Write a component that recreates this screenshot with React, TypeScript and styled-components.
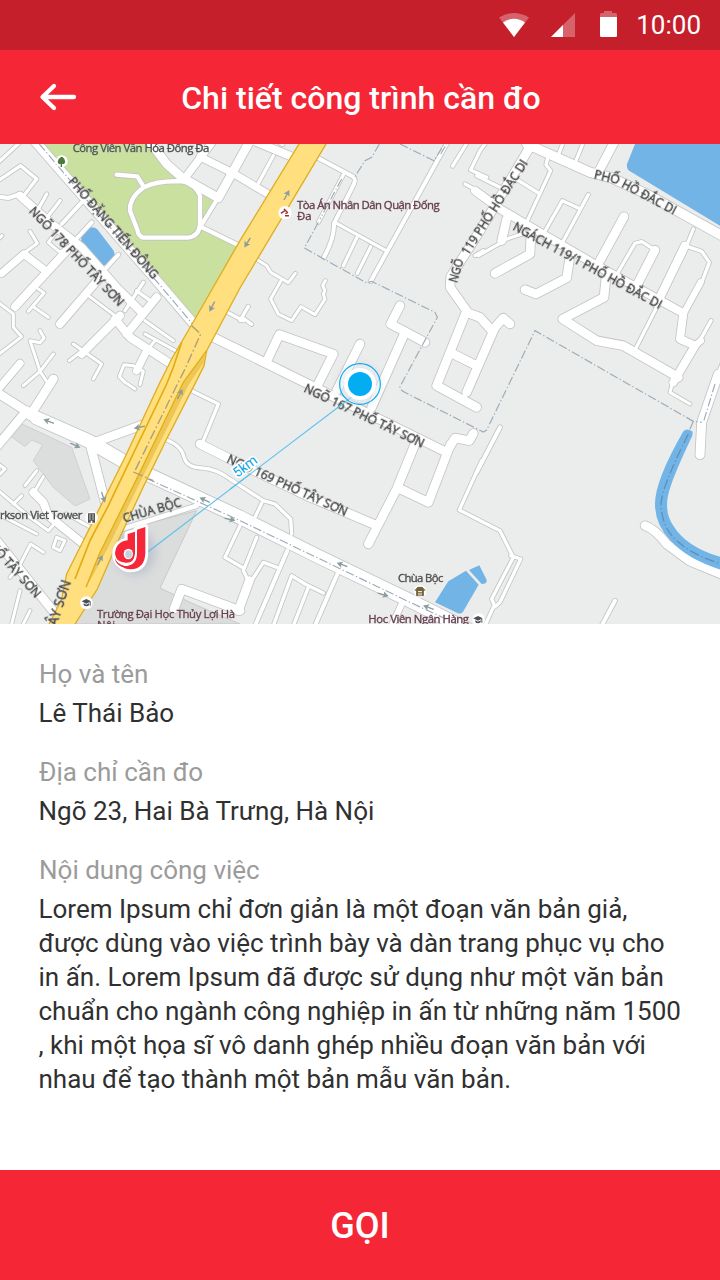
import React from "react";
import styled, { createGlobalStyle } from "styled-components";

const GlobalStyle = createGlobalStyle`
  * { box-sizing: border-box; }
  body { margin: 0; background: #fff; font-family: Roboto, "Noto Sans", sans-serif; }
`;

const Screen = styled.div`
  width: 720px;
  height: 1280px;
  display: flex;
  flex-direction: column;
  background: #fff;
  overflow: hidden;
`;

const StatusBar = styled.div`
  height: 50px;
  flex: none;
  display: flex;
  align-items: center;
  justify-content: flex-end;
  padding-right: 19px;
  background: #c41f2b;
  color: #fff;
`;

const StatusIcons = styled.svg`
  display: block;
  width: 120px;
  height: 50px;
  margin-right: 17px;
`;

const Clock = styled.span`
  font-size: 26px;
  line-height: 50px;
`;

const AppBar = styled.header`
  height: 94px;
  flex: none;
  display: grid;
  grid-template-columns: 120px 1fr 120px;
  align-items: center;
  background: #f52636;
`;

const BackButton = styled.button`
  display: block;
  border: 0;
  padding: 0 0 0 38px;
  background: none;
  svg { display: block; }
`;

const Title = styled.h1`
  margin: 0;
  padding: 2px 0 0 2px;
  text-align: center;
  font-size: 32px;
  line-height: 40px;
  font-weight: 500;
  color: #fff;
  white-space: nowrap;
`;

const MapView = styled.svg`
  display: block;
  flex: none;
  width: 720px;
  height: 480px;
  background: #ebecec;
`;

const Details = styled.main`
  flex: 1;
  padding: 33px 0 0 38.5px;
`;

const Field = styled.section`
  margin-bottom: 25px;
`;

const Label = styled.div`
  padding-left: 0.5px;
  font-size: 26px;
  line-height: 34px;
  color: #9b9b9b;
`;

const Value = styled.div`
  margin-top: 5px;
  font-size: 26px;
  line-height: 34px;
  color: #303030;
  white-space: nowrap;
`;

const CallButton = styled.button`
  height: 110px;
  flex: none;
  border: 0;
  padding: 2px 0 0;
  background: #f52636;
  color: #fff;
  font-family: inherit;
  font-size: 36px;
  font-weight: 500;
`;

type Road = [number, string];

const roads: Road[] = [
  [10, "M60 -5L-5 55M-5 110L62 65L110 105L75 150M140 150L115 195M180 170L145 215M430 415L375 500M410 440L450 470"],
  [9, "M75 325L112 298L90 262M210 305L180 325L145 295L170 262M115 435L132 447L85 502M100 488L145 520M265 455L345 515M435 530L520 590M435 570L530 622M465 590L440 620"],
  [9, "M220 600L305 660L280 705M208 650L240 625M-5 475L40 510L40 550L65 578L-5 632M120 560L132 582L120 596L90 590L110 650L120 682L70 725M160 630L120 682L145 720M405 735L375 715L358 698L372 662L400 665L430 682L420 722M-5 285L6 275"],
  [12, "M-5 158L25 162L60 150M245 175L185 240M275 235L215 300M652 165L600 250M600 247L712 302M355 332L300 392"],
  [13, "M350 92L412 97L432 130M432 130Q470 110 540 112Q580 112 600 155L600 240Q598 278 562 281L430 281Q415 277 412 257L390 200Q388 160 432 130Z"],
  [28, "M100 -14L300 215L470 410L590 550"],
  [26, "M440 -20L500 60L545 100L655 162L750 -10"],
  [22, "M560 95L640 -10M600 38L700 88L812 155"],
  [24, "M755 -12L885 42M60 155L155 240L245 310L350 430L420 500M200 320L45 488M300 400L180 540M470 460L380 570M360 515L245 630M345 525L390 580L515 662"],
  [22, "M5 388L72 330L130 375M440 620L410 680M60 658L-5 735"],
  [10, "M820 35L775 118M682 505L730 530M720 530L745 487M733 525L755 541"],
  [12, "M950 40L1060 98Q1068 105 1062 120L1002 238Q1004 280 972 340M1345 -10L1112 412"],
  [10, "M1030 92L955 235M1005 235L1158 320M1070 282L1030 365M1112 308L1072 388M1405 -10L1358 66M1455 0L1440 20L1412 78L1460 100M1395 120L1450 150M1425 335L1450 320M830 -10L848 2"],
  [9, "M765 343L800 365L812 385L865 416L886 388M842 412L812 465L835 510L875 530L903 488L945 512L975 465L970 450L975 440L968 425L976 410"],
  [26, "M1592 5L1440 260L1352 398L1350 430L1400 500L1310 725L1430 790M1400 505L1440 520L1472 556M1530 540L1510 522L1485 550L1400 745M1360 630L1430 665"],
  [26, "M640 580L1340 925M800 652L838 572L1000 630L952 725M1080 600L1010 740M1200 485L1172 540L1275 595M1215 565L1115 790"],
  [26, "M1245 900L1190 1035L1105 1200M1340 925L1365 882L1408 890L1420 868M1352 900L1285 1075L1195 1032M600 900L720 960L920 1055L1125 1142"],
  [10, "M575 740L655 780L610 890M500 888Q545 905 552 940Q560 970 605 972Q650 975 690 1005L790 1070L825 1080L872 1125L875 1170M785 1078L765 1120"],
  [26, "M160 705L90 815M80 800L-10 908M-10 745L100 815M270 900L440 838M270 900L318 1085"],
  [40, "M110 822L270 893L420 980L720 1120L950 1235L1220 1365L1400 1455"],
  [9, "M-5 960L15 975L-5 995M110 980L75 1025M-5 1040L90 1120L145 1160L180 1120M-5 1110L110 1170M40 1080L65 1055M130 998L105 1040M200 1110L290 1160M160 1210L170 1180L195 1190L180 1220ZM60 1262L92 1200L130 1225M60 1340L35 1440M90 1400L70 1440M30 1300L60 1262"],
  [24, "M100 1045L130 1075L145 1115L250 1200"],
  [26, "M-10 1190L70 1290L160 1402M522 1395L545 1335L720 1400"],
  [14, "M350 1160L590 1085"],
  [10, "M720 1145L675 1240L730 1272M770 1180L730 1280L745 1310M830 1270L790 1255L755 1310M820 1445L875 1295L915 1320L970 1347M925 1330L880 1445"],
  [26, "M748 1310L715 1400"],
  [12, "M862 1220L765 1445M1012 1290L945 1445M1845 1370L1805 1445M1500 850L1430 985"],
  [18, "M1205 1380L1175 1445"],
  [10, "M1445 950L1378 1098L1500 1160L1540 1240L1475 1365L1485 1388L1500 1375L1562 1245L1532 1235M1482 1385L1455 1445"],
  [26, "M1935 1145Q1965 1155 2000 1200L2070 1252L2175 1295"],
  [27, "M2155 690L2105 835L2100 932"],
  [9, "M2018 715L2010 745L2070 780M2165 660L2145 715"],
  [10, "M1750 -5L1728 50M1690 -5L1672 40M1645 35L1638 62L1652 80L1575 245M1548 105L1620 150M1430 95L1510 135M1765 152L1685 300M1735 192L1687 170L1630 270"],
  [28, "M1580 0L1770 85L1830 100L1940 150L2175 280"],
  [26, "M1845 -10L1795 85M1872 218L1800 350M1593 270L1590 330L1485 388M1708 350L1700 402L1608 450L1575 437M1818 400L1812 460L1688 525L1790 590L1870 605L2035 700M1965 318L1905 435M1520 225L1505 290"],
  [24, "M1425 140L1500 195L1620 265L1800 370L2050 508L2040 585L2085 605L2020 715"],
  [10, "M1505 295L1435 335M1505 290L1580 265M1850 392L1905 298L1925 293L1965 318M1970 490L1905 618M2055 305L2105 322L2128 355L2105 415M2085 605L2105 580L2133 530M2080 255L2060 305"],
  [25, "M2055 305L1970 480"],
  [19, "M2102 415L2050 510M2085 605L2103 590"],
];

const water = [
  "M1905 0L1881 60Q1878 75 1890 82L2160 245V0Z",
  "M248 270L268 252Q280 246 292 256L335 312Q350 328 340 345L326 360Q315 368 295 360Q280 355 277 340Q250 320 244 300Q242 278 248 270Z",
  "M1305 1375L1345 1312L1398 1280L1436 1322L1390 1402Q1385 1412 1372 1407Z",
  "M1407 1278L1438 1264L1460 1308Q1462 1320 1445 1320Z",
  "M2050 862Q2060 850 2078 863L2077 875Q2010 1015 2003 1060Q1995 1110 2020 1145Q2060 1210 2165 1240V1278Q2060 1245 2010 1188Q1965 1140 1965 1080Q1965 1010 2050 862Z",
];

const boundaries = [
  "M1138 0L1115 40L1095 50L1065 98M955 235L913 312L1100 417L1115 412L1305 505L1312 520L1200 728Q1200 740 1220 748L1450 864L1460 858L1605 560L2080 832L2105 835M2080 832L2068 860M1200 0L1302 50L1330 5",
  "M118 0L300 215L470 412L582 545M400 985L720 1130L1220 1370L1370 1440M2145 720L2110 835M1322 30L1340 0M1025 105L960 225",
];

const RIVER_LINE = "M2065 870Q1985 1030 1983 1080Q1985 1150 2030 1190Q2080 1235 2165 1260";

interface StreetLabel { x: number; y: number; angle: number; length: number; text: string; size?: number }

const streets: StreetLabel[] = [
  { x: 203, y: 113, angle: 49, length: 390, text: "PHỐ ĐẶNG TIẾN ĐÔNG" },
  { x: 85, y: 203, angle: 46.5, length: 394, text: "NGÕ 178 PHỐ TÂY SƠN" },
  { x: 1371, y: 418, angle: -74, length: 72, text: "NGÕ" },
  { x: 1404, y: 336, angle: -57, length: 332, text: "119 PHỐ HỒ ĐẮC DI" },
  { x: 1780, y: 103, angle: 13, length: 78, text: "PHỐ" },
  { x: 1862, y: 128, angle: 28, length: 180, text: "HỒ ĐẮC DI" },
  { x: 1536, y: 256, angle: 28.5, length: 502, text: "NGÁCH 119/1 PHỐ HỒ ĐẮC DI" },
  { x: 909, y: 742, angle: 25.5, length: 395, text: "NGÕ 167 PHỐ TÂY SƠN" },
  { x: 678, y: 954, angle: 24.5, length: 393, text: "NGÕ 169 PHỐ TÂY SƠN" },
  { x: 373, y: 1136, angle: -16, length: 180, text: "CHÙA BỘC" },
  { x: -34, y: 1208, angle: 48, length: 210, text: "HỐ TÂY SƠN" },
  { x: 170, y: 1447, angle: -72, length: 140, text: "ÂY SƠN", size: 42 },
];

const Street = styled.text`
  font-family: "Open Sans", "Noto Sans", sans-serif;
  fill: #424242;
  stroke: #424242;
  stroke-width: 1.3px;
  filter: drop-shadow(0 0 2px #fff);
`;

const Place = styled.text<{ $tone?: string }>`
  font-family: "Open Sans", "Noto Sans", sans-serif;
  font-size: 34px;
  fill: ${(p) => p.$tone ?? "#66404f"};
  stroke: ${(p) => p.$tone ?? "#66404f"};
  stroke-width: 1.2px;
  filter: drop-shadow(0 0 2px #fff);
`;

const Distance = styled.text`
  font-family: Roboto, sans-serif;
  font-size: 42px;
  fill: #0ba5ea;
  stroke: #fff;
  stroke-width: 10px;
  stroke-linejoin: round;
  paint-order: stroke;
`;

function Arrow({ x, y, angle }: { x: number; y: number; angle: number }) {
  return (
    <g transform={`translate(${x} ${y}) rotate(${angle})`}>
      <path d="M-17 0H6" stroke="#8b9b9f" strokeWidth="4" />
      <path d="M17 0L-1 -10L3 0L-1 10Z" fill="#8b9b9f" />
    </g>
  );
}

function SiteMap() {
  return (
    <MapView viewBox="0 0 2160 1440" role="img" aria-label="Bản đồ">
      <defs>
        <filter id="soft" x="-50%" y="-50%" width="200%" height="200%">
          <feGaussianBlur stdDeviation="14" />
        </filter>
      </defs>
      <path d="M125 0H445L500 60L545 100L640 165L600 250L722 305L585 525Z" fill="#c9e09f" />
      <path d="M50 832L215 910L270 1065L225 1086L160 1030L100 950L128 902L95 888L75 908L20 868Z" fill="#dcdddd" stroke="#cfd0d0" strokeWidth="3" />
      <path d="M360 1160L590 1100L480 1332L570 1375L720 1440H215Z" fill="#dbdcdc" stroke="#c8c9c9" strokeWidth="3" />
      {water.slice(0, 4).map((d) => <path key={d} d={d} fill="#73b4e6" />)}
      <g fill="none" stroke="#c3c4c4" strokeLinecap="round" strokeLinejoin="round">
        {roads.map(([w, d]) => <path key={d} d={d} strokeWidth={w + 5} />)}
      </g>
      <g fill="none" stroke="#fff" strokeLinecap="round" strokeLinejoin="round">
        {roads.map(([w, d]) => <path key={d} d={d} strokeWidth={w} />)}
      </g>
      <path d={water[4]} fill="#73b4e6" />
      <g fill="none" stroke="#9cacb8" strokeWidth="3.500" strokeDasharray="26 7 4 7">
        {boundaries.map((d) => <path key={d} d={d} />)}
      </g>
      <path d={RIVER_LINE} fill="none" stroke="#5f8fb6" strokeWidth="4" strokeDasharray="30 8 4 8" />
      <path
        d="M900 -5L720 290L585 525L515 645L475 725L375 940L245 1200L200 1290L185 1365L145 1445H222L292 1335L355 1190L430 1028L500 885L582 725L612 665L620 620L720 432L981 -5Z"
        fill="#ffdf7e" stroke="#dfae20" strokeWidth="4"
      />
      <path d="M618 625L550 718L410 1005L300 1230L258 1330L278 1295L322 1215L435 985L515 825L566 722L612 655Z" fill="#edc655" />
      <g fill="none" stroke="#e2ad12" strokeWidth="5">
        <path d="M545 595L520 670L500 720L325 1085L270 1190L225 1305" />
        <path d="M620 620L550 715L410 1005L298 1230L258 1330" strokeWidth="4" />
      </g>
      <path d="M575 545L602 570L555 675L525 735L405 980M400 984L460 1010" fill="none" stroke="#a99f76" strokeWidth="4" strokeDasharray="30 8 5 8" />
      <Arrow x={860} y={153} angle={-62} />
      <Arrow x={742} y={296} angle={122} />
      <Arrow x={636} y={488} angle={118} />
      <Arrow x={540} y={750} angle={-63} />
      <Arrow x={300} y={1248} angle={-63} />
      <Arrow x={146} y={832} angle={202} />
      <Arrow x={226} y={904} angle={24} />
      <Arrow x={418} y={850} angle={168} />
      <Arrow x={310} y={1060} angle={72} />
      <Arrow x={614} y={1068} angle={205} />
      <Arrow x={690} y={1126} angle={12} />
      <Arrow x={1026} y={1262} angle={200} />
      <Arrow x={1150} y={1352} angle={15} />
      <Arrow x={1285} y={1390} angle={200} />

      {streets.map((s) => (
        <Street key={s.text + s.x} transform={`translate(${s.x} ${s.y}) rotate(${s.angle})`} fontSize={s.size ?? 37} textLength={s.length} lengthAdjust="spacingAndGlyphs">
          {s.text}
        </Street>
      ))}

      <Place x={218} y={23} textLength={410} $tone="#4a504b">Công Viên Văn Hóa Đống Đa</Place>
      <Place x={891} y={195} textLength={428}>Tòa Án Nhân Dân Quận Đống</Place>
      <Place x={891} y={229}>Đa</Place>
      <Place x={0} y={1126} textLength={247} $tone="#4e4e4e">rkson Viet Tower</Place>
      <Place x={291} y={1421} textLength={414}>Trường Đại Học Thủy Lợi Hà</Place>
      <Place x={291} y={1455}>Nội</Place>
      <Place x={1194} y={1313} textLength={136} $tone="#4e4e4e">Chùa Bộc</Place>
      <Place x={1105} y={1437} textLength={302}>Học Viện Ngân Hàng</Place>

      <g fill="#fff">
        <circle cx="185" cy="52" r="18" />
        <circle cx="855" cy="206" r="20" />
        <circle cx="275" cy="1121" r="19" />
        <circle cx="259" cy="1376" r="19" />
        <circle cx="1260" cy="1342" r="19" />
        <circle cx="1436" cy="1427" r="19" />
      </g>
      <path d="M183 39h5l5 6l3 9l-4 6h-6v9h-4v-9h-6l-3-6l3-9Z" fill="#4c7a3c" />
      <path d="M843 208L857 198M852 195L862 205M856 209L864 205M855 215H867" fill="none" stroke="#9d302d" strokeWidth="4.500" />
      <path d="M264 1108h21v28h-8v-6h-5v6h-8Z" fill="#555" />
      <path d="M268 1113h4m5 0h4m-13 6h4m5 0h4m-13 6h4m5 0h4" stroke="#fff" strokeWidth="3" />
      {[[259, 1376], [1434, 1427]].map(([x, y]) => (
        <g key={x} transform={`translate(${x} ${y})`} fill="#4d4d57">
          <path d="M-14 -4L0 -11L14 -4L0 3Z" />
          <path d="M-8 2L0 6L8 2V8Q0 14 -8 8ZM10 -2h3v11h-3Z" />
        </g>
      ))}
      <path d="M1247 1338l6-8h14l6 8h-3v17h-20v-17ZM1244 1338h32" fill="#75643b" stroke="#75643b" strokeWidth="3" />
      <path d="M1254 1343h12m-9 12v-8m6 8v-8" stroke="#fff" strokeWidth="3" />

      <path d="M444 1223L1060 755" stroke="#5cc3ec" strokeWidth="3.5" />
      <Distance transform="translate(712 1002) rotate(-37)" textLength="79">5km</Distance>
      <path d="M690 1036L752 989" stroke="#5cc3ec" strokeWidth="3.5" />

      <ellipse cx="1080" cy="722" rx="60" ry="58" fill="#8ba3b0" opacity="0.3" filter="url(#soft)" />
      <circle cx="1080" cy="720" r="61" fill="#fff" fillOpacity="0.35" stroke="#0aaaf0" strokeWidth="3.5" />
      <circle cx="1080" cy="720" r="48" fill="#fff" />
      <circle cx="1080" cy="720" r="36" fill="#04acf1" />

      <ellipse cx="405" cy="1225" rx="60" ry="68" fill="#7690ad" opacity="0.3" filter="url(#soft)" />
      <path
        d="M436 1149V1228Q434 1275 392 1276Q372 1276 362 1264Q345 1254 345 1230Q347 1196 382 1190V1170L408 1162V1158Z"
        fill="#fff" stroke="#fff" strokeWidth="17" strokeLinejoin="round"
      />
      <path d="M383 1170L405 1163V1229Q402 1258 377 1256Q345 1254 345 1228Q348 1193 383 1189Z" fill="#f52738" />
      <ellipse cx="385" cy="1230" rx="14" ry="16" fill="#fff" />
      <ellipse cx="386" cy="1231" rx="10" ry="12" fill="#c6d1dc" />
      <path d="M411 1157L436 1149V1228Q434 1275 392 1276Q374 1276 365 1266Q411 1270 411 1226Z" fill="#f52738" />
      <path d="M345 1236Q349 1258 373 1262Q403 1262 408 1229" fill="none" stroke="#fff" strokeWidth="3" />
      <path d="M345 1242Q352 1262 373 1265L366 1269Q346 1261 345 1242Z" fill="#f52738" />
    </MapView>
  );
}

export default function App() {
  return (
    <Screen>
      <GlobalStyle />
      <StatusBar>
        <StatusIcons viewBox="0 0 120 50" aria-hidden="true">
          <g fill="#fff">
            <path d="M0 17.500Q15 8.500 30 17.500L15 37Z" opacity="0.3" />
            <path d="M4 22.500Q15 15 26 22.500L15 37Z" />
            <path d="M76 13V37H52Z" opacity="0.3" />
            <path d="M64 25V37H52Z" />
            <path d="M101 17V14.500Q101 13 102.500 13H105V11H113V13H116.500Q118 13 118 14.500V17Z" opacity="0.3" />
            <path d="M101 17H118V35.500Q118 37 116.500 37H102.500Q101 37 101 35.500Z" />
          </g>
        </StatusIcons>
        <Clock>10:00</Clock>
      </StatusBar>
      <AppBar>
        <BackButton aria-label="Quay lại">
          <svg width="40" height="30" viewBox="0 0 40 30" fill="none" stroke="#fff" strokeWidth="4.300" strokeLinecap="round" strokeLinejoin="round">
            <path d="M36 15H5M16 4L4.500 15L16 26" />
          </svg>
        </BackButton>
        <Title>Chi tiết công trình cần đo</Title>
      </AppBar>
      <SiteMap />
      <Details>
        <Field>
          <Label>Họ và tên</Label>
          <Value>Lê Thái Bảo</Value>
        </Field>
        <Field>
          <Label>Địa chỉ cần đo</Label>
          <Value>Ngõ 23, Hai Bà Trưng, Hà Nội</Value>
        </Field>
        <Field>
          <Label>Nội dung công việc</Label>
          <Value>
            Lorem Ipsum chỉ đơn giản là một đoạn văn bản giả,<br />
            được dùng vào việc trình bày và dàn trang phục vụ cho<br />
            in ấn. Lorem Ipsum đã được sử dụng như một văn bản<br />
            chuẩn cho ngành công nghiệp in ấn từ những năm 1500<br />
            , khi một họa sĩ vô danh ghép nhiều đoạn văn bản với<br />
            nhau để tạo thành một bản mẫu văn bản.
          </Value>
        </Field>
      </Details>
      <CallButton>GỌI</CallButton>
    </Screen>
  );
}
